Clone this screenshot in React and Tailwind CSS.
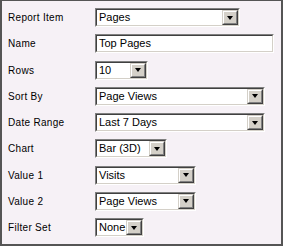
const FIELD_FONT = { fontFamily: '"Liberation Sans", Arial, sans-serif' };

function Sunken({ width, children }) {
  return (
    <div
      className="h-[19px] border border-t-[#808080] border-l-[#808080] border-b-white border-r-white"
      style={{ width }}
    >
      <div className="flex h-full border border-t-[#404040] border-l-[#404040] border-b-[#d4d0c8] border-r-[#d4d0c8] bg-white">
        {children}
      </div>
    </div>
  );
}

function Select({ width, value }) {
  return (
    <Sunken width={width}>
      <div className="flex flex-1 items-center overflow-hidden pl-[2px] text-[11px] leading-none text-black">
        {value}
      </div>
      <div className="h-full w-[16px] border border-t-[#d4d0c8] border-l-[#d4d0c8] border-b-[#404040] border-r-[#404040]">
        <div className="flex h-full items-center justify-center border border-t-white border-l-white border-b-[#808080] border-r-[#808080] bg-[#d4d0c8]">
          <div className="h-0 w-0 border-x-[3.5px] border-t-[4px] border-x-transparent border-t-black" />
        </div>
      </div>
    </Sunken>
  );
}

function TextInput({ width, value }) {
  return (
    <Sunken width={width}>
      <div className="flex flex-1 items-center pl-[2px] text-[11px] leading-none text-black">{value}</div>
    </Sunken>
  );
}

const ROWS = [
  { label: "Report Item", kind: "select", width: 145, value: "Pages" },
  { label: "Name", kind: "input", width: 179, value: "Top Pages" },
  { label: "Rows", kind: "select", width: 53, value: "10" },
  { label: "Sort By", kind: "select", width: 170, value: "Page Views" },
  { label: "Date Range", kind: "select", width: 170, value: "Last 7 Days" },
  { label: "Chart", kind: "select", width: 72, value: "Bar (3D)" },
  { label: "Value 1", kind: "select", width: 101, value: "Visits" },
  { label: "Value 2", kind: "select", width: 101, value: "Page Views" },
  { label: "Filter Set", kind: "select", width: 49, value: "None" },
];

export default function App() {
  return (
    <div
      className="flex h-[246px] w-[283px] flex-col gap-[7.25px] border-t border-r-2 border-b-2 border-l-2 border-[#555555] bg-[#f6f1f6] pt-[7px] pl-[6px]"
      style={FIELD_FONT}
    >
      {ROWS.map((row) => (
        <div key={row.label} className="flex items-center">
          <div className="w-[87px] text-[10px] tracking-[0.3px] text-black">{row.label}</div>
          {row.kind === "select" ? (
            <Select width={row.width} value={row.value} />
          ) : (
            <TextInput width={row.width} value={row.value} />
          )}
        </div>
      ))}
    </div>
  );
}
